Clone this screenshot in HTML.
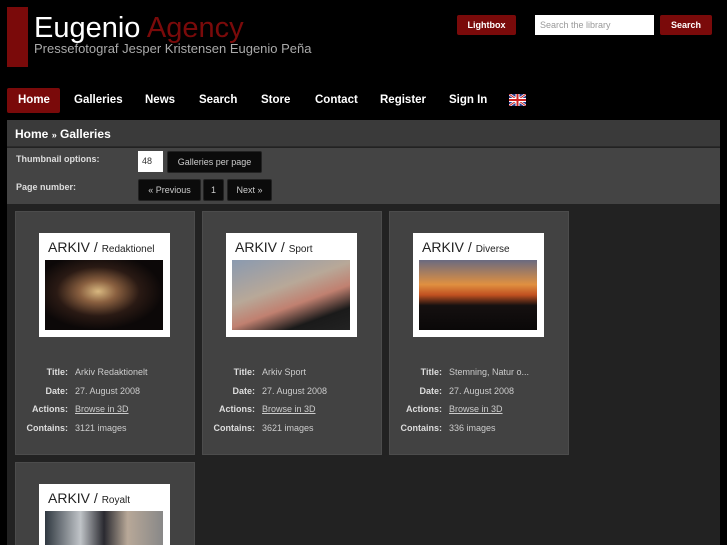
<!DOCTYPE html>
<html style="height:545px;overflow:hidden"><head><meta charset="utf-8"><style>
*{margin:0;padding:0;box-sizing:border-box}
body{width:727px;height:545px;background:#000;font-family:"Liberation Sans",sans-serif;position:relative;overflow:hidden;color:#ddd}
.a{position:absolute}
.btn{position:absolute;background:#7a0a0a;color:#fff;font-weight:bold;font-size:9px;text-align:center;border-radius:2px}
.nav{position:absolute;top:94px;color:#fff;font-weight:bold;font-size:11.5px}
.dbtn{position:absolute;background:#0b0b0b;border:1px solid #222;color:#ccc;font-size:9px;text-align:center;border-radius:2px;top:0}
.card{position:absolute;width:180px;height:244px;background:#424242;border:1px solid #4c4c4c}
.th{position:absolute;left:23px;top:21px;width:131px;height:104px;background:#fff}
.th .t{position:absolute;left:9px;top:6px;font-size:14px;color:#222;white-space:nowrap}
.th .t small{font-size:10px}
.th .im{position:absolute;left:6px;top:27px;width:118px;height:70px}
.info{position:absolute;left:0;top:155px;font-size:9px;width:180px}
.info div{height:18.7px;position:relative}
.info b{position:absolute;right:128px;color:#ddd}
.info span{position:absolute;left:59px;color:#ccc}
.info u{color:#ccc}
</style></head><body>
<div class="a" style="left:7px;top:7px;width:21px;height:60px;background:#7a0a0a"></div>
<div class="a" style="left:34px;top:10px;font-size:29px;color:#fff;line-height:36px">Eugenio <span style="color:#7a0a0a">Agency</span></div>
<div class="a" style="left:34px;top:41px;font-size:13px;color:#aaa;line-height:16px">Pressefotograf Jesper Kristensen Eugenio Peña</div>
<div class="btn" style="left:457px;top:15px;width:59px;height:20px;line-height:20px">Lightbox</div>
<div class="a" style="left:535px;top:15px;width:119px;height:20px;background:#fff;font-size:9px;color:#999;line-height:20px;padding-left:5px">Search the library</div>
<div class="btn" style="left:660px;top:15px;width:52px;height:20px;line-height:20px">Search</div>
<div class="a" style="left:7px;top:88px;width:53px;height:25px;background:#7a0a0a;border-radius:2px"></div>
<div class="nav" style="left:18px">Home</div>
<div class="nav" style="left:74px">Galleries</div>
<div class="nav" style="left:145px">News</div>
<div class="nav" style="left:199px">Search</div>
<div class="nav" style="left:261px">Store</div>
<div class="nav" style="left:315px">Contact</div>
<div class="nav" style="left:380px">Register</div>
<div class="nav" style="left:449px">Sign In</div>
<svg class="a" style="left:509px;top:94px" width="17" height="12" viewBox="0 0 17 12"><rect width="17" height="12" fill="#2a3a8a"/><path d="M0 0L17 12M17 0L0 12" stroke="#fff" stroke-width="2.5"/><path d="M0 0L17 12M17 0L0 12" stroke="#c22" stroke-width="1"/><path d="M8.5 0V12M0 6H17" stroke="#fff" stroke-width="4"/><path d="M8.5 0V12M0 6H17" stroke="#c22" stroke-width="2"/></svg>
<div class="a" style="left:7px;top:120px;width:713px;height:425px;background:#222"></div>
<div class="a" style="left:7px;top:120px;width:713px;height:27px;background:#3a3a3a;border-bottom:1px solid #2a2a2a"></div>
<div class="a" style="left:15px;top:127px;font-size:12px;font-weight:bold;color:#fff">Home <span style="font-size:9px">»</span> Galleries</div>
<div class="a" style="left:7px;top:148px;width:713px;height:56px;background:#444"></div>
<div class="a" style="left:16px;top:154px;font-size:9px;font-weight:bold;color:#ddd">Thumbnail options:</div>
<div class="a" style="left:16px;top:182px;font-size:9px;font-weight:bold;color:#ddd">Page number:</div>
<div class="a" style="left:138px;top:151px;width:25px;height:21px;background:#fff;font-size:9px;color:#333;line-height:21px;padding-left:4px">48</div>
<div class="a" style="left:167px;top:151px;width:95px;height:22px"><div class="dbtn" style="left:0;width:95px;height:22px;line-height:21px">Galleries per page</div></div>
<div class="a" style="left:138px;top:179px;width:135px;height:22px">
<div class="dbtn" style="left:0;width:63px;height:22px;line-height:21px">« Previous</div>
<div class="dbtn" style="left:65px;width:21px;height:22px;line-height:21px">1</div>
<div class="dbtn" style="left:89px;width:45px;height:22px;line-height:21px">Next »</div></div>

<div class="card" style="left:15px;top:211px"><div class="th"><div class="t">ARKIV / <small>Redaktionel</small></div><div class="im" style="background:radial-gradient(ellipse at 45% 45%,#d8b880 0,#8a6040 20%,#2a1a14 45%,#0c0808 70%)"></div></div>
<div class="info"><div><b>Title:</b><span>Arkiv Redaktionelt</span></div><div><b>Date:</b><span>27. August 2008</span></div><div><b>Actions:</b><span><u>Browse in 3D</u></span></div><div><b>Contains:</b><span>3121 images</span></div></div></div>

<div class="card" style="left:202px;top:211px"><div class="th"><div class="t">ARKIV / <small>Sport</small></div><div class="im" style="background:linear-gradient(160deg,#8a9ab0 0,#b8a898 40%,#c08070 60%,#1a1a1a 80%,#222 100%)"></div></div>
<div class="info"><div><b>Title:</b><span>Arkiv Sport</span></div><div><b>Date:</b><span>27. August 2008</span></div><div><b>Actions:</b><span><u>Browse in 3D</u></span></div><div><b>Contains:</b><span>3621 images</span></div></div></div>

<div class="card" style="left:389px;top:211px"><div class="th"><div class="t">ARKIV / <small>Diverse</small></div><div class="im" style="background:linear-gradient(180deg,#6a6a80 0,#e09040 35%,#c05020 50%,#151010 65%,#0a0808 100%)"></div></div>
<div class="info"><div><b>Title:</b><span>Stemning, Natur o...</span></div><div><b>Date:</b><span>27. August 2008</span></div><div><b>Actions:</b><span><u>Browse in 3D</u></span></div><div><b>Contains:</b><span>336 images</span></div></div></div>

<div class="card" style="left:15px;top:462px;height:83px;border-bottom:0"><div class="th"><div class="t">ARKIV / <small>Royalt</small></div><div class="im" style="height:35px;background:linear-gradient(90deg,#303840 0,#c0c4c8 30%,#2a2a30 50%,#b8a898 70%,#888 100%)"></div></div></div>
</body></html>
